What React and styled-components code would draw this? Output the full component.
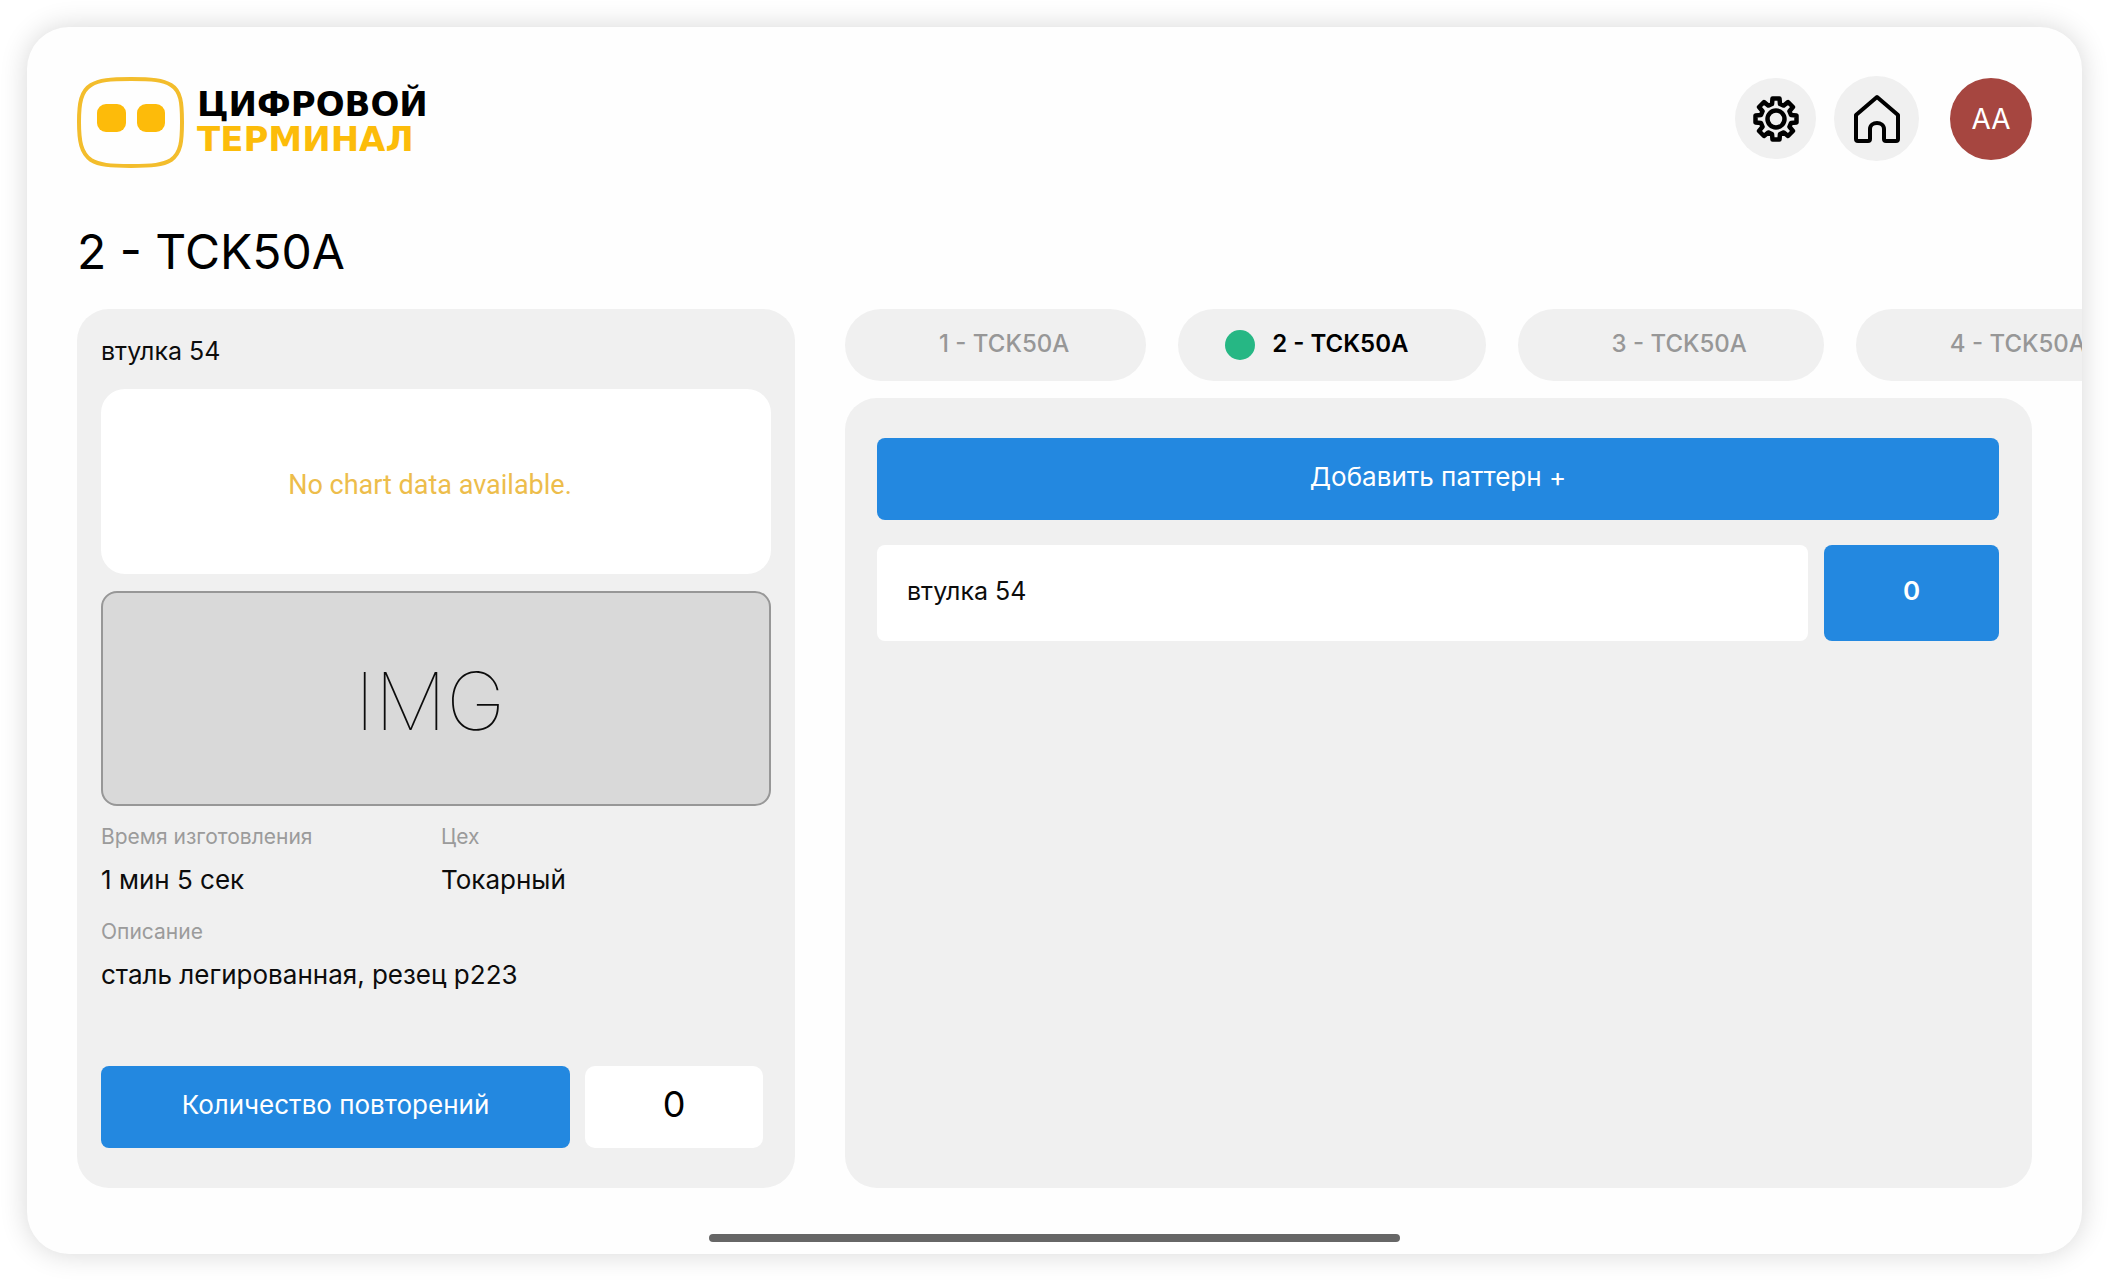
import React from "react";
import styled, { createGlobalStyle } from "styled-components";

const GlobalStyle = createGlobalStyle`
  * {
    box-sizing: border-box;
  }

  body {
    margin: 0;
    background: #ffffff;
    color: #0c0c0c;
    font-family: Inter, "Open Sans", sans-serif;
  }

  button, input {
    font-family: inherit;
  }
`;

const Page = styled.div`
  min-height: 100vh;
  padding: 27px;
  display: flex;
`;

const Screen = styled.div`
  flex: 1;
  min-width: 0;
  display: flex;
  flex-direction: column;
  padding: 49px 50px 12px;
  border-radius: 42px;
  background: #fefefe;
  box-shadow: 0 0 28px rgba(0, 0, 0, 0.16);
  overflow: hidden;
`;

const Header = styled.header`
  display: flex;
  align-items: flex-start;
  justify-content: space-between;
  height: 94px;
`;

const Logo = styled.a`
  display: flex;
  align-items: center;
  gap: 12px;
  text-decoration: none;
`;

const LogoText = styled.span`
  display: flex;
  flex-direction: column;
  font-family: "DejaVu Sans", sans-serif;
  font-weight: 700;
  font-size: 34px;
  line-height: 35px;
  color: #000000;

  b {
    color: #fcbc0a;
  }
`;

const Actions = styled.nav`
  display: flex;
  align-items: center;
  gap: 18px;
`;

const RoundButton = styled.button`
  width: ${(p) => p.$size}px;
  height: ${(p) => p.$size}px;
  padding: 0;
  border: 0;
  border-radius: 50%;
  display: grid;
  place-items: center;
  background: #f0f0f0;
  color: #000000;
`;

const Avatar = styled(RoundButton)`
  margin-left: 13px;
  background: #a64640;
  color: #ffffff;
  font-size: 28px;
`;

const Title = styled.h1`
  margin: 53px 0 28px;
  font-size: 48px;
  line-height: 58px;
  font-weight: 400;
  color: #000000;
`;

const Content = styled.main`
  flex: 1;
  display: flex;
  gap: 50px;
`;

const Panel = styled.section`
  display: flex;
  flex-direction: column;
  border-radius: 32px;
  background: #f0f0f0;
`;

const DetailPanel = styled(Panel)`
  flex: 0 0 718px;
  padding: 25px 24px 40px;
`;

const PartName = styled.h2`
  margin: 0 0 21px;
  font-size: 25px;
  line-height: 34px;
  font-weight: 400;
`;

const ChartBox = styled.div`
  height: 185px;
  display: grid;
  place-items: center;
  padding: 6px 12px 0 0;
  border-radius: 24px;
  background: #ffffff;
  color: #edbd4b;
  font-family: Roboto, sans-serif;
  font-size: 27px;
`;

const ImageBox = styled.div`
  height: 215px;
  margin-top: 17px;
  padding: 4px 12px 0 0;
  display: grid;
  place-items: center;
  border: 2px solid #979797;
  border-radius: 16px;
  background: #d9d9d9;
  font-size: 80px;
  font-weight: 100;
`;

const Facts = styled.dl`
  margin: 17px 0 0;
  display: grid;
  grid-template-columns: 340px 1fr;
  row-gap: 21px;
`;

const Fact = styled.div`
  grid-column: ${(p) => (p.$wide ? "1 / -1" : "auto")};

  dt {
    font-size: 21px;
    line-height: 28px;
    color: #9b9b9b;
  }

  dd {
    margin: 12px 0 0;
    font-size: 26px;
    line-height: 34px;
  }
`;

const Repeats = styled.div`
  display: flex;
  gap: 15px;
  margin-top: auto;
`;

const BlueButton = styled.button`
  height: ${(p) => p.$height || 82}px;
  width: ${(p) => p.$width || "auto"};
  padding: 0 0 5px;
  border: 0;
  border-radius: 8px;
  background: #2388e0;
  color: #ffffff;
  font-size: 26px;
  font-weight: ${(p) => (p.$bold ? 600 : 400)};
`;

const RepeatInput = styled.input`
  width: 178px;
  height: 82px;
  padding: 0 0 6px;
  border: 0;
  border-radius: 10px;
  background: #ffffff;
  color: #000000;
  text-align: center;
  font-size: 36px;
`;

const Right = styled.div`
  flex: 1;
  min-width: 0;
  display: flex;
  flex-direction: column;
`;

const Tabs = styled.div`
  display: flex;
  gap: 32px;
  margin: 0 -50px 17px 0;
  overflow: hidden;
`;

const Tab = styled.button`
  flex: none;
  height: 72px;
  padding: 0 77px 0 47px;
  display: flex;
  align-items: center;
  gap: 17px;
  border: 0;
  border-radius: 36px;
  background: #f0f0f0;
  color: ${(p) => (p.$active ? "#000000" : "#979797")};
  font-size: 24px;
  font-weight: ${(p) => (p.$active ? 600 : 500)};
`;

const TabLabel = styled.span`
  padding-bottom: 4px;
`;

const Dot = styled.span`
  width: 30px;
  height: 30px;
  border-radius: 50%;
  background: ${(p) => (p.$active ? "#26b784" : "transparent")};
`;

const PatternPanel = styled(Panel)`
  flex: 1;
  padding: 40px 33px 40px 32px;
  gap: 25px;
`;

const PatternRow = styled.div`
  display: flex;
  gap: 16px;
`;

const PatternName = styled.div`
  flex: 1;
  height: 96px;
  padding: 0 30px 4px;
  display: flex;
  align-items: center;
  border-radius: 8px;
  background: #ffffff;
  font-size: 25px;
`;

const HomeBar = styled.div`
  width: 691px;
  height: 8px;
  margin: 46px auto 0;
  border-radius: 4px;
  background: #666666;
`;

const RobotMark = () => (
  <svg width="108" height="92" viewBox="0 0 108 92" fill="none">
    <path
      d="M54 3C75 3 86 4 94 9C104 15 105 27 105 46C105 65 104 77 94 84C86 89 75 90 54 90C33 90 22 89 14 84C4 77 2 65 2 46C2 27 4 15 14 9C22 4 33 3 54 3Z"
      stroke="#f3bd2c"
      strokeWidth="4"
    />
    <rect x="20" y="28" width="29" height="28" rx="9" fill="#fdbb0a" />
    <rect x="60" y="28" width="28" height="28" rx="9" fill="#fdbb0a" />
  </svg>
);

// one tooth, repeated every 45 degrees
const TOOTH = [[-4, -15], [-3.5, -20.5], [3.5, -20.5], [4, -15]];

const gearPoints = Array.from({ length: 8 }, (_, k) => {
  const a = (k * Math.PI) / 4;
  return TOOTH.map(
    ([x, y]) =>
      `${x * Math.cos(a) - y * Math.sin(a)},${x * Math.sin(a) + y * Math.cos(a)}`
  ).join(" ");
}).join(" ");

const GearIcon = () => (
  <svg width="46" height="46" viewBox="-23 -23 46 46" fill="none" stroke="currentColor" strokeWidth="4.5" strokeLinejoin="round">
    <circle r="8.5" />
    <polygon points={gearPoints} />
  </svg>
);

const HomeIcon = () => (
  <svg width="48" height="50" viewBox="0 0 48 50" fill="none" stroke="currentColor" strokeWidth="4" strokeLinejoin="round">
    <path d="M24 3L45 21V45Q45 47 43 47H33Q31 47 31 45V35C31 27 17 27 17 35V45Q17 47 15 47H5Q3 47 3 45V21Z" />
  </svg>
);

const machines = ["1 - TCK50A", "2 - TCK50A", "3 - TCK50A", "4 - TCK50A"];

const App = () => {
  const [active, setActive] = React.useState(1);
  const [repeats, setRepeats] = React.useState("0");

  return (
    <>
      <GlobalStyle />
      <Page>
        <Screen>
          <Header>
            <Logo href="#">
              <RobotMark />
              <LogoText>
                ЦИФРОВОЙ
                <b>ТЕРМИНАЛ</b>
              </LogoText>
            </Logo>
            <Actions>
              <RoundButton $size={81} aria-label="Настройки">
                <GearIcon />
              </RoundButton>
              <RoundButton $size={85} aria-label="Главная">
                <HomeIcon />
              </RoundButton>
              <Avatar $size={82}>AA</Avatar>
            </Actions>
          </Header>

          <Title>{machines[active]}</Title>

          <Content>
            <DetailPanel>
              <PartName>втулка 54</PartName>
              <ChartBox>No chart data available.</ChartBox>
              <ImageBox>IMG</ImageBox>
              <Facts>
                <Fact>
                  <dt>Время изготовления</dt>
                  <dd>1 мин 5 сек</dd>
                </Fact>
                <Fact>
                  <dt>Цех</dt>
                  <dd>Токарный</dd>
                </Fact>
                <Fact $wide>
                  <dt>Описание</dt>
                  <dd>сталь легированная, резец р223</dd>
                </Fact>
              </Facts>
              <Repeats>
                <BlueButton $width="469px">Количество повторений</BlueButton>
                <RepeatInput
                  aria-label="Количество повторений"
                  value={repeats}
                  onChange={(e) => setRepeats(e.target.value)}
                />
              </Repeats>
            </DetailPanel>

            <Right>
              <Tabs>
                {machines.map((name, i) => (
                  <Tab key={name} $active={i === active} onClick={() => setActive(i)}>
                    <Dot $active={i === active} />
                    <TabLabel>{name}</TabLabel>
                  </Tab>
                ))}
              </Tabs>
              <PatternPanel>
                <BlueButton>Добавить паттерн +</BlueButton>
                <PatternRow>
                  <PatternName>втулка 54</PatternName>
                  <BlueButton $width="175px" $height={96} $bold>
                    0
                  </BlueButton>
                </PatternRow>
              </PatternPanel>
            </Right>
          </Content>

          <HomeBar />
        </Screen>
      </Page>
    </>
  );
};

export default App;
